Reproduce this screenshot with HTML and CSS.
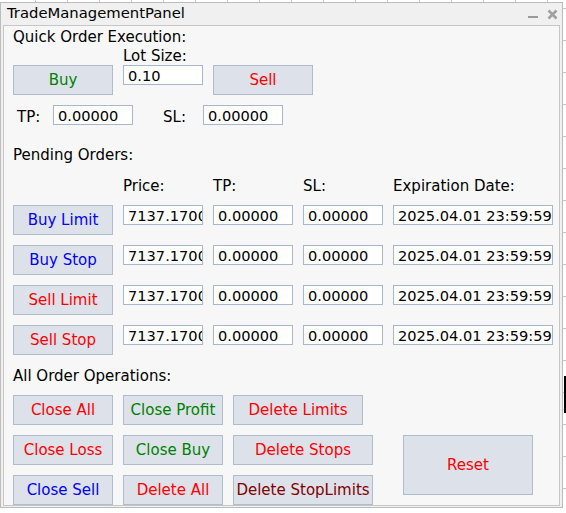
FILE: index.html
```html
<!DOCTYPE html>
<html>
<head>
<meta charset="utf-8">
<title>TradeManagementPanel</title>
<link rel="stylesheet" href="styles.css">
</head>
<body>
<div class="window">
  <div class="titlebar">
    <span class="title">TradeManagementPanel</span>
    <svg class="controls" width="40" height="22" viewBox="0 0 40 22">
      <rect x="8" y="13" width="10" height="2" fill="#9a9a9a"/>
      <path d="M28.5 7.5 L36.5 15.5 M36.5 7.5 L28.5 15.5" stroke="#a0a0a0" stroke-width="2.6" fill="none"/>
    </svg>
  </div>
  <div class="client">
    <div class="heading h-quick">Quick Order Execution:</div>
    <div class="quick-row">
      <button class="btn w100 drop green">Buy</button>
      <div class="lot-col">
        <div class="label lot-label">Lot Size:</div>
        <input class="field w80" type="text" value="0.10">
      </div>
      <button class="btn w100 drop red">Sell</button>
    </div>
    <div class="tpsl-row">
      <span class="label tp-label">TP:</span>
      <input class="field w80" type="text" value="0.00000">
      <span class="label sl-label">SL:</span>
      <input class="field w80" type="text" value="0.00000">
    </div>

    <div class="heading h-pending">Pending Orders:</div>
    <div class="pending-head">
      <span class="label col-price">Price:</span>
      <span class="label col-tp">TP:</span>
      <span class="label col-sl">SL:</span>
      <span class="label col-exp">Expiration Date:</span>
    </div>
    <div class="pending-grid">
      <button class="btn blue">Buy Limit</button>
      <input class="field" type="text" value="7137.17000">
      <input class="field" type="text" value="0.00000">
      <input class="field" type="text" value="0.00000">
      <input class="field" type="text" value="2025.04.01 23:59:59">

      <button class="btn blue">Buy Stop</button>
      <input class="field" type="text" value="7137.17000">
      <input class="field" type="text" value="0.00000">
      <input class="field" type="text" value="0.00000">
      <input class="field" type="text" value="2025.04.01 23:59:59">

      <button class="btn red">Sell Limit</button>
      <input class="field" type="text" value="7137.17000">
      <input class="field" type="text" value="0.00000">
      <input class="field" type="text" value="0.00000">
      <input class="field" type="text" value="2025.04.01 23:59:59">

      <button class="btn red">Sell Stop</button>
      <input class="field" type="text" value="7137.17000">
      <input class="field" type="text" value="0.00000">
      <input class="field" type="text" value="0.00000">
      <input class="field" type="text" value="2025.04.01 23:59:59">
    </div>

    <div class="heading h-ops">All Order Operations:</div>
    <div class="ops-grid">
      <button class="btn red">Close All</button>
      <button class="btn green">Close Profit</button>
      <button class="btn red w130">Delete Limits</button>
      <span class="spacer"></span>

      <button class="btn red">Close Loss</button>
      <button class="btn green">Close Buy</button>
      <button class="btn red w140">Delete Stops</button>
      <button class="btn red reset">Reset</button>

      <button class="btn blue">Close Sell</button>
      <button class="btn red">Delete All</button>
      <button class="btn maroon w140">Delete StopLimits</button>
    </div>
  </div>
</div>
<div class="chart-cursor"></div>
</body>
</html>
```

FILE: styles.css
```css
html, body {
  margin: 0;
  padding: 0;
  height: 100%;
}

body {
  position: relative;
  background-color: #ffffff;
  background-image:
    repeating-linear-gradient(90deg, #c4c4c4 0 1px, transparent 1px 32px),
    repeating-linear-gradient(180deg, #c4c4c4 0 1px, transparent 1px 32px);
  background-size: 100% 2px, 3px 100%;
  background-position: 35px 0, 563px 8px;
  background-repeat: no-repeat;
  font-family: "DejaVu Sans", "Noto Sans", sans-serif;
}

.window {
  margin-top: 2px;
  width: 563px;
  height: 506px;
  box-sizing: border-box;
  border: 1px solid #bcbcbc;
  background: #f0f0f0;
  padding: 0 2px 1px 2px;
  font-family: "DejaVu Sans", "Noto Sans", sans-serif;
  font-size: 15px;
  color: #000000;
}

.titlebar {
  height: 22px;
  display: flex;
  align-items: flex-start;
}

.title {
  padding-left: 4px;
  font-size: 14.8px;
  line-height: 20px;
  color: #000000;
}

.controls {
  margin-left: auto;
  display: block;
}

.client {
  height: 481px;
  box-sizing: border-box;
  border: 1px solid #c6c6c6;
  background: #f7f7f7;
  padding: 1px 0 0 9px;
  overflow: hidden;
}

.heading,
.label {
  line-height: 20px;
  white-space: nowrap;
}

.btn {
  box-sizing: border-box;
  width: 100px;
  height: 30px;
  margin: 0;
  padding: 0;
  border: 1px solid #afbccc;
  border-radius: 0;
  background: #dde2ea;
  font-family: inherit;
  font-size: 15px;
  line-height: 17px;
  text-align: center;
  white-space: nowrap;
}

.w100 { width: 100px; }

.green { color: #008000; }
.red { color: #ff0000; }
.blue { color: #0000ff; }
.maroon { color: #800000; }

.field {
  box-sizing: border-box;
  width: 100%;
  height: 20px;
  margin: 0;
  padding: 0 0 0 4px;
  border: 1px solid #a8b8cc;
  border-radius: 0;
  background: #ffffff;
  color: #000000;
  font-family: inherit;
  font-size: 14.6px;
  outline: none;
}

.field.w80 { width: 80px; }

/* Quick order section */
.quick-row {
  display: flex;
  align-items: flex-start;
  gap: 10px;
  height: 48px;
}

.drop { margin-top: 18px; }

.lot-col {
  display: flex;
  flex-direction: column;
  width: 80px;
}

.lot-label { line-height: 18px; }

.tpsl-row {
  display: flex;
  align-items: flex-start;
  margin-top: 10px;
  height: 20px;
}

.tp-label {
  margin-left: 4px;
  width: 36px;
  padding-top: 2px;
}

.sl-label {
  margin-left: 30px;
  width: 40px;
  padding-top: 2px;
}

/* Pending orders */
.h-pending { margin-top: 20px; }

.pending-head {
  display: grid;
  grid-template-columns: 100px 80px 80px 80px 160px;
  column-gap: 10px;
  margin-top: 11px;
}

.col-price { grid-column: 2; }
.col-tp { grid-column: 3; }
.col-sl { grid-column: 4; }
.col-exp { grid-column: 5; }

.pending-grid {
  display: grid;
  grid-template-columns: 100px 80px 80px 80px 160px;
  grid-auto-rows: 30px;
  column-gap: 10px;
  row-gap: 10px;
  margin-top: 9px;
  align-items: start;
}

/* All order operations */
.h-ops { margin-top: 11px; }

.ops-grid {
  display: grid;
  grid-template-columns: 100px 100px 140px 150px;
  grid-auto-rows: 30px;
  column-gap: 10px;
  row-gap: 10px;
  margin-top: 9px;
  align-items: start;
  justify-items: start;
}

.ops-grid .btn { width: 100px; }
.ops-grid .btn.w130 { width: 130px; }
.ops-grid .btn.w140 { width: 140px; }

.ops-grid .reset {
  grid-row: span 2;
  width: 130px;
  height: 60px;
  margin-left: 20px;
}

.chart-cursor {
  position: absolute;
  left: 564px;
  top: 376px;
  width: 2px;
  height: 37px;
  background: #000000;
}
```
